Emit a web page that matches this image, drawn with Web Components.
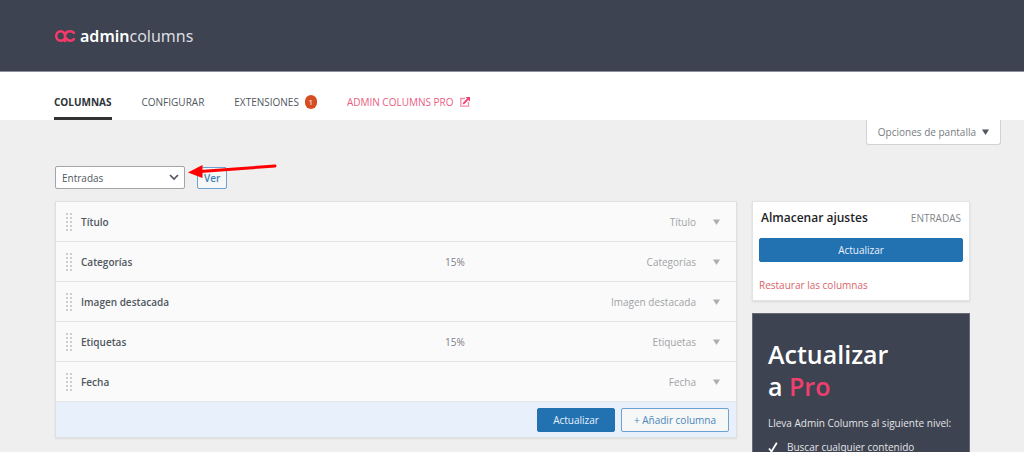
<!DOCTYPE html>
<html lang="es">
<head>
<meta charset="utf-8">
<meta name="viewport" content="width=device-width, initial-scale=1">
<title>Admin Columns</title>
<style>
html { scrollbar-width: none; background: #efefef; }
body { margin: 0; font: 10px/16px "Open Sans", "Noto Sans", sans-serif; color: #3c434a; }
</style>
</head>
<body>
<ac-app></ac-app>
<script>
const define = (name, html, setup) => {
  const template = document.createElement('template');
  template.innerHTML = html;
  customElements.define(name, class extends HTMLElement {
    constructor() {
      super();
      this.attachShadow({ mode: 'open' }).append(template.content.cloneNode(true));
    }
    connectedCallback() { if (setup) setup(this, this.shadowRoot); }
  });
};

define('ac-button', `
<style>
:host { display: inline-flex; }
button { flex: 1; box-sizing: border-box; height: 24px; padding: 0 15px; border: 1px solid #2271b1; border-radius: 2px;
  font: inherit; white-space: nowrap; background: #2271b1; color: #e9f2fa; }
:host([kind=outline]) button { background: #f6f7f7; border-color: #6ba2cf; color: #4a86bb; padding: 0 12px; }
:host([size=small]) button { height: 22px; padding: 0 6px; color: #3d7fb8; font-weight: 600; }
</style>
<button type="button"><slot></slot></button>`);

define('ac-header', `
<style>
:host { display: flex; align-items: center; height: 72px; padding: 0 54px; background: #3d4350; border-bottom: 1px solid #8d8f9d; box-sizing: border-box; }
a { display: flex; align-items: center; gap: 4px; color: #dcdde1; text-decoration: none; font: 16px/22px "Noto Sans", sans-serif; }
b { font-weight: 600; color: #fff; }
svg { display: block; }
</style>
<a href="#"><svg width="22" height="14" viewBox="0 0 22 14" fill="none" stroke="#f83a6a" stroke-width="2.500" stroke-linecap="round" stroke-linejoin="round" aria-hidden="true"><path d="M11 12V6.800C11 4 9.200 2.300 6.700 2.300S2.200 4.300 2.200 7.100s1.900 4.700 4.500 4.700c1.200 0 2.200-.4 3-1.200"/><path d="M11 6.800c.3-2.700 2.400-4.500 5-4.500 1.600 0 2.900.5 3.900 1.600M12.300 9.300c.8 1.600 2.200 2.500 3.900 2.500 1.500 0 2.800-.6 3.700-1.600"/></svg><span><b>admin</b>columns</span></a>`);

define('ac-nav', `
<style>
:host { display: block; background: #fff; padding: 0 54px; }
nav { display: flex; align-items: stretch; gap: 30px; height: 48px; }
a { display: flex; align-items: center; gap: 6px; color: #50575e; text-decoration: none; padding: 15px 0 0; box-sizing: border-box; border-bottom: 3px solid transparent; white-space: nowrap; }
a.on { font-weight: 700; color: #2c3338; border-color: #333; }
a.pro { color: #ec5c83; }
.count { width: 12px; height: 14px; border-radius: 7px; background: #d54e21; color: #fff; font-size: 8px; line-height: 14px; text-align: center; }
</style>
<nav><a class="on" href="#">COLUMNAS</a><a href="#">CONFIGURAR</a><a href="#">EXTENSIONES <span class="count">1</span></a><a class="pro" href="#">ADMIN COLUMNS PRO <svg width="10" height="10" viewBox="0 0 10 10" fill="none" aria-hidden="true"><path d="M5 1.500H.8v7.700h7.700V5" stroke="#f58aa6" stroke-width="1.300"/><path d="M3.200 6.800 8 2" stroke="#f0416f" stroke-width="1.800"/><path d="M5.500 0H10v4.500z" fill="#f0416f"/></svg></a></nav>`);

define('ac-screen-options', `
<style>
:host { display: flex; justify-content: flex-end; padding-right: 23px; }
button { display: flex; align-items: center; gap: 6px; height: 25px; padding: 0 11px; box-sizing: border-box; background: #fff; border: 1px solid #d0d2d5; border-top: 0; border-radius: 0 0 3px 3px; color: #787c82; font: inherit; }
</style>
<button type="button">Opciones de pantalla <svg width="7" height="6" viewBox="0 0 7 6" aria-hidden="true"><path d="M0 .5h7L3.500 6z" fill="#50575e"/></svg></button>`);

define('ac-toolbar', `
<style>
:host { display: flex; align-items: center; gap: 12px; position: relative; height: 23px; }
.pick { display: grid; align-items: center; width: 130px; }
select, .pick svg { grid-area: 1 / 1; }
select { appearance: none; height: 23px; margin: 0; padding: 0 6px; border: 1px solid #a2a5a9; border-radius: 2px; background: #fff; color: #50575e; font: inherit; }
.pick svg { justify-self: end; margin-right: 6px; pointer-events: none; }
.pointer { position: absolute; left: 132px; top: -5px; pointer-events: none; }
</style>
<span class="pick"><select aria-label="Tipo de contenido"><option>Entradas</option></select><svg width="10" height="7" viewBox="0 0 10 7" fill="none" stroke="#50575e" stroke-width="1.700" aria-hidden="true"><path d="m1 1 4 4 4-4"/></svg></span>
<ac-button kind="outline" size="small">Ver</ac-button>
<svg class="pointer" width="92" height="20" viewBox="0 0 92 20" aria-hidden="true"><path d="M13 10.500 88 5" stroke="#fe0000" stroke-width="3" stroke-linecap="round"/><path d="M1 11.500 15.500 4v13z" fill="#fe0000"/></svg>`);

define('ac-column', `
<style>
:host { display: grid; grid-template-columns: 25px 364px 1fr 40px; align-items: center; height: 40px; box-sizing: border-box; border-bottom: 1px solid #e4e5e6; background: #fafafa; }
.grip { justify-self: center; }
b { color: #50575e; font-weight: 600; }
.width { color: #7b8085; }
.mid { display: flex; justify-content: space-between; }
.type { color: #a0a3a6; }
button { justify-self: start; margin-left: 13px; padding: 4px; border: 0; background: none; }
svg { display: block; }
</style>
<svg class="grip" width="6" height="18" viewBox="0 0 6 18" aria-hidden="true"><path d="M1 0v18M5 0v18" stroke="#cbcdcf" stroke-width="2" stroke-dasharray="2 2"/></svg><b></b><span class="mid"><span class="width"></span><span class="type"></span></span>
<button type="button" aria-label="Abrir columna"><svg width="7" height="6" viewBox="0 0 7 6" aria-hidden="true"><path d="M0 .5h7L3.500 6z" fill="#acafb2"/></svg></button>`,
(host, root) => {
  root.querySelector('b').textContent = host.getAttribute('label');
  root.querySelector('.type').textContent = host.getAttribute('label');
  root.querySelector('.width').textContent = host.getAttribute('width') || '';
});

define('ac-column-list', `
<style>
:host { display: block; border: 1px solid #dfe0e2; box-shadow: 0 1px 2px rgba(0,0,0,.08); }
footer { display: flex; justify-content: flex-end; align-items: center; gap: 6px; height: 35px; padding-right: 7px; background: #e8f1fb; }
</style>
<slot></slot>
<footer><ac-button>Actualizar</ac-button><ac-button kind="outline">+ Añadir columna</ac-button></footer>`);

define('ac-save-box', `
<style>
:host { display: flex; flex-direction: column; background: #fff; border: 1px solid #e2e3e4; box-shadow: 0 1px 2px rgba(0,0,0,.1); padding: 8px 6px 7px; }
header { display: flex; justify-content: space-between; align-items: center; padding: 0 2px; }
h2 { margin: 0; font-size: 12px; line-height: 16px; font-weight: 600; color: #1d2327; }
small { font-size: 10px; color: #82868a; }
ac-button { margin: 12px 0 15px; }
a { color: #d9646a; text-decoration: none; }
</style>
<header><h2>Almacenar ajustes</h2><small>ENTRADAS</small></header>
<ac-button>Actualizar</ac-button>
<a href="#">Restaurar las columnas</a>`);

define('ac-promo', `
<style>
:host { display: block; background: #3d4350; border: 1px solid #666b77; color: #e4e5e8; padding: 24px 15px 16px; }
h2 { margin: 0; color: #fff; font-size: 25px; line-height: 32px; font-weight: 600; }
em { font-style: normal; color: #ee3f6d; }
p { margin: 13px 0 8px; }
ul { list-style: none; margin: 0; padding: 0; }
li { display: flex; align-items: center; gap: 9px; }
</style>
<h2>Actualizar<br>a <em>Pro</em></h2>
<p>Lleva Admin Columns al siguiente nivel:</p>
<ul><li><svg width="10" height="11" viewBox="0 0 10 11" fill="none" stroke="#fff" stroke-width="1.800" aria-hidden="true"><path d="m1 6.500 2.500 3L8.800.8"/></svg>Buscar cualquier contenido</li></ul>`);

define('ac-app', `
<style>
:host { display: block; }
main { display: grid; grid-template-columns: minmax(0, 1fr) 218px; column-gap: 15px; padding: 21px 54px 0 55px; }
ac-toolbar { grid-column: 1 / -1; margin-bottom: 12px; }
aside { display: flex; flex-direction: column; gap: 12px; }
ac-column-list { align-self: start; }
</style>
<ac-header></ac-header>
<ac-nav></ac-nav>
<ac-screen-options></ac-screen-options>
<main>
  <ac-toolbar></ac-toolbar>
  <ac-column-list>
    <ac-column label="Título"></ac-column>
    <ac-column label="Categorías" width="15%"></ac-column>
    <ac-column label="Imagen destacada"></ac-column>
    <ac-column label="Etiquetas" width="15%"></ac-column>
    <ac-column label="Fecha"></ac-column>
  </ac-column-list>
  <aside><ac-save-box></ac-save-box><ac-promo></ac-promo></aside>
</main>`);
</script>
</body>
</html>
